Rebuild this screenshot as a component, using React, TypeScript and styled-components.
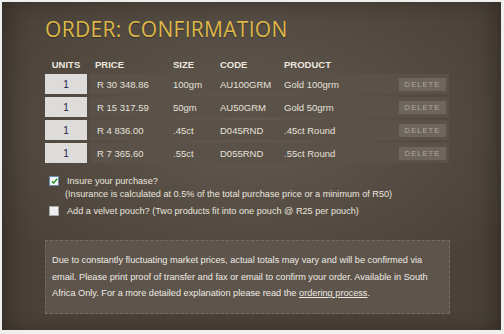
import React from "react";
import styled, { createGlobalStyle } from "styled-components";

const Global = createGlobalStyle`
  html, body { margin: 0; padding: 0; background: #efefed; }
  body { font-family: "Liberation Sans", Arial, sans-serif; }
`;

const Frame = styled.div`
  padding: 2px 3px 4px 2px;
  width: 504px;
  height: 334px;
  box-sizing: border-box;
`;

const Panel = styled.div`
  width: 499px;
  height: 328px;
  box-sizing: border-box;
  padding: 15px 0 0 43px;
  background:
    radial-gradient(ellipse 60% 55% at 50% 38%, rgba(100, 92, 83, 0.9) 0%, rgba(100, 92, 83, 0) 100%),
    #4a4239;
  box-shadow: inset 14px 0 22px -8px rgba(30, 24, 18, 0.45), inset -14px 0 22px -8px rgba(30, 24, 18, 0.45);
  display: flex;
  flex-direction: column;
`;

const Title = styled.h1`
  margin: 0;
  font-family: "Open Sans", "Noto Sans", sans-serif;
  font-weight: 400;
  font-size: 21px;
  line-height: 24px;
  letter-spacing: 0.3px;
  color: #dfb748;
  text-shadow: 0 1px 1px rgba(0, 0, 0, 0.35);
`;

const HeaderRow = styled.div`
  display: grid;
  grid-template-columns: 42px 3px 83px 47px 64px 1fr;
  margin-top: 17px;
  width: 404px;
  height: 13px;
  align-items: center;
`;

const HeadCell = styled.div<{ $center?: boolean; $shift?: number }>`
  font-size: 9.5px;
  font-weight: 700;
  color: #ece7df;
  text-align: ${(p) => (p.$center ? "center" : "left")};
  padding-left: ${(p) => p.$shift ?? 0}px;
  white-space: nowrap;
`;

const Rows = styled.div`
  display: flex;
  flex-direction: column;
  gap: 3px;
  margin-top: 3px;
`;

const Row = styled.div`
  display: flex;
  gap: 3px;
  height: 20px;
`;

const UnitBox = styled.div`
  width: 42px;
  background: #dddcda;
  color: #22224a;
  font-size: 10px;
  display: flex;
  align-items: center;
  justify-content: center;
`;

const Line = styled.div`
  width: 359px;
  background: #5a5249;
  display: grid;
  grid-template-columns: 76px 47px 64px 1fr 47px;
  align-items: center;
  padding: 0 3px 0 7px;
  box-sizing: border-box;
`;

const Cell = styled.div`
  font-size: 9.5px;
  color: #e6e1d9;
  white-space: nowrap;
`;

const DeleteBtn = styled.div`
  height: 13px;
  background: #6e665e;
  color: #b0a89f;
  font-size: 7.5px;
  letter-spacing: 1.1px;
  display: flex;
  align-items: center;
  justify-content: center;
`;

const Options = styled.div`
  margin-top: 11px;
  padding-left: 4px;
  display: flex;
  flex-direction: column;
`;

const OptRow = styled.div<{ $gapTop?: number }>`
  display: flex;
  align-items: center;
  gap: 8px;
  height: 13px;
  margin-top: ${(p) => p.$gapTop ?? 0}px;
`;

const Box = styled.span<{ $checked?: boolean }>`
  width: 8px;
  height: 8px;
  flex: none;
  background: ${(p) => (p.$checked ? "#f4f6f8" : "#eeeeee")};
  border: 1px solid ${(p) => (p.$checked ? "#6c8ab0" : "#a8a8a8")};
  display: flex;
  align-items: center;
  justify-content: center;
`;

const OptText = styled.span<{ $indent?: boolean }>`
  font-size: 9.15px;
  color: #e9e4dc;
  white-space: nowrap;
  padding-left: ${(p) => (p.$indent ? "16px" : "0")};
`;

const Note = styled.div`
  margin-top: 23px;
  width: 405px;
  height: 74px;
  box-sizing: border-box;
  background: #5d554c;
  border: 1px dashed #756d63;
  padding: 11px 4px 0 6px;
  font-size: 9.2px;
  line-height: 16.5px;
  color: #eeeae3;
`;

const Link = styled.a`
  color: #eeeae3;
  text-decoration: underline;
`;

const rows = [
  ["R 30 348.86", "100gm", "AU100GRM", "Gold 100grm"],
  ["R 15 317.59", "50gm", "AU50GRM", "Gold 50grm"],
  ["R 4 836.00", ".45ct", "D045RND", ".45ct Round"],
  ["R 7 365.60", ".55ct", "D055RND", ".55ct Round"],
];

export default function App() {
  return (
    <>
      <Global />
      <Frame>
        <Panel>
          <Title>ORDER: CONFIRMATION</Title>
          <HeaderRow>
            <HeadCell $center>UNITS</HeadCell>
            <span />
            <HeadCell $shift={5}>PRICE</HeadCell>
            <HeadCell>SIZE</HeadCell>
            <HeadCell>CODE</HeadCell>
            <HeadCell>PRODUCT</HeadCell>
          </HeaderRow>
          <Rows>
            {rows.map((r) => (
              <Row key={r[2]}>
                <UnitBox>1</UnitBox>
                <Line>
                  <Cell>{r[0]}</Cell>
                  <Cell>{r[1]}</Cell>
                  <Cell>{r[2]}</Cell>
                  <Cell>{r[3]}</Cell>
                  <DeleteBtn>DELETE</DeleteBtn>
                </Line>
              </Row>
            ))}
          </Rows>
          <Options>
            <OptRow>
              <Box $checked>
                <svg width="7" height="6" viewBox="0 0 7 6">
                  <path d="M0.8 3.2 L2.6 5 L6.2 0.8" fill="none" stroke="#2f9a2a" strokeWidth="1.6" />
                </svg>
              </Box>
              <OptText>Insure your purchase?</OptText>
            </OptRow>
            <OptRow>
              <OptText $indent>(Insurance is calculated at 0.5% of the total purchase price or a minimum of R50)</OptText>
            </OptRow>
            <OptRow $gapTop={4}>
              <Box />
              <OptText>Add a velvet pouch? (Two products fit into one pouch @ R25 per pouch)</OptText>
            </OptRow>
          </Options>
          <Note>
            Due to constantly fluctuating market prices, actual totals may vary and will be confirmed via
            email. Please print proof of transfer and fax or email to confirm your order. Available in South
            Africa Only. For a more detailed explanation please read the <Link>ordering process</Link>.
          </Note>
        </Panel>
      </Frame>
    </>
  );
}
